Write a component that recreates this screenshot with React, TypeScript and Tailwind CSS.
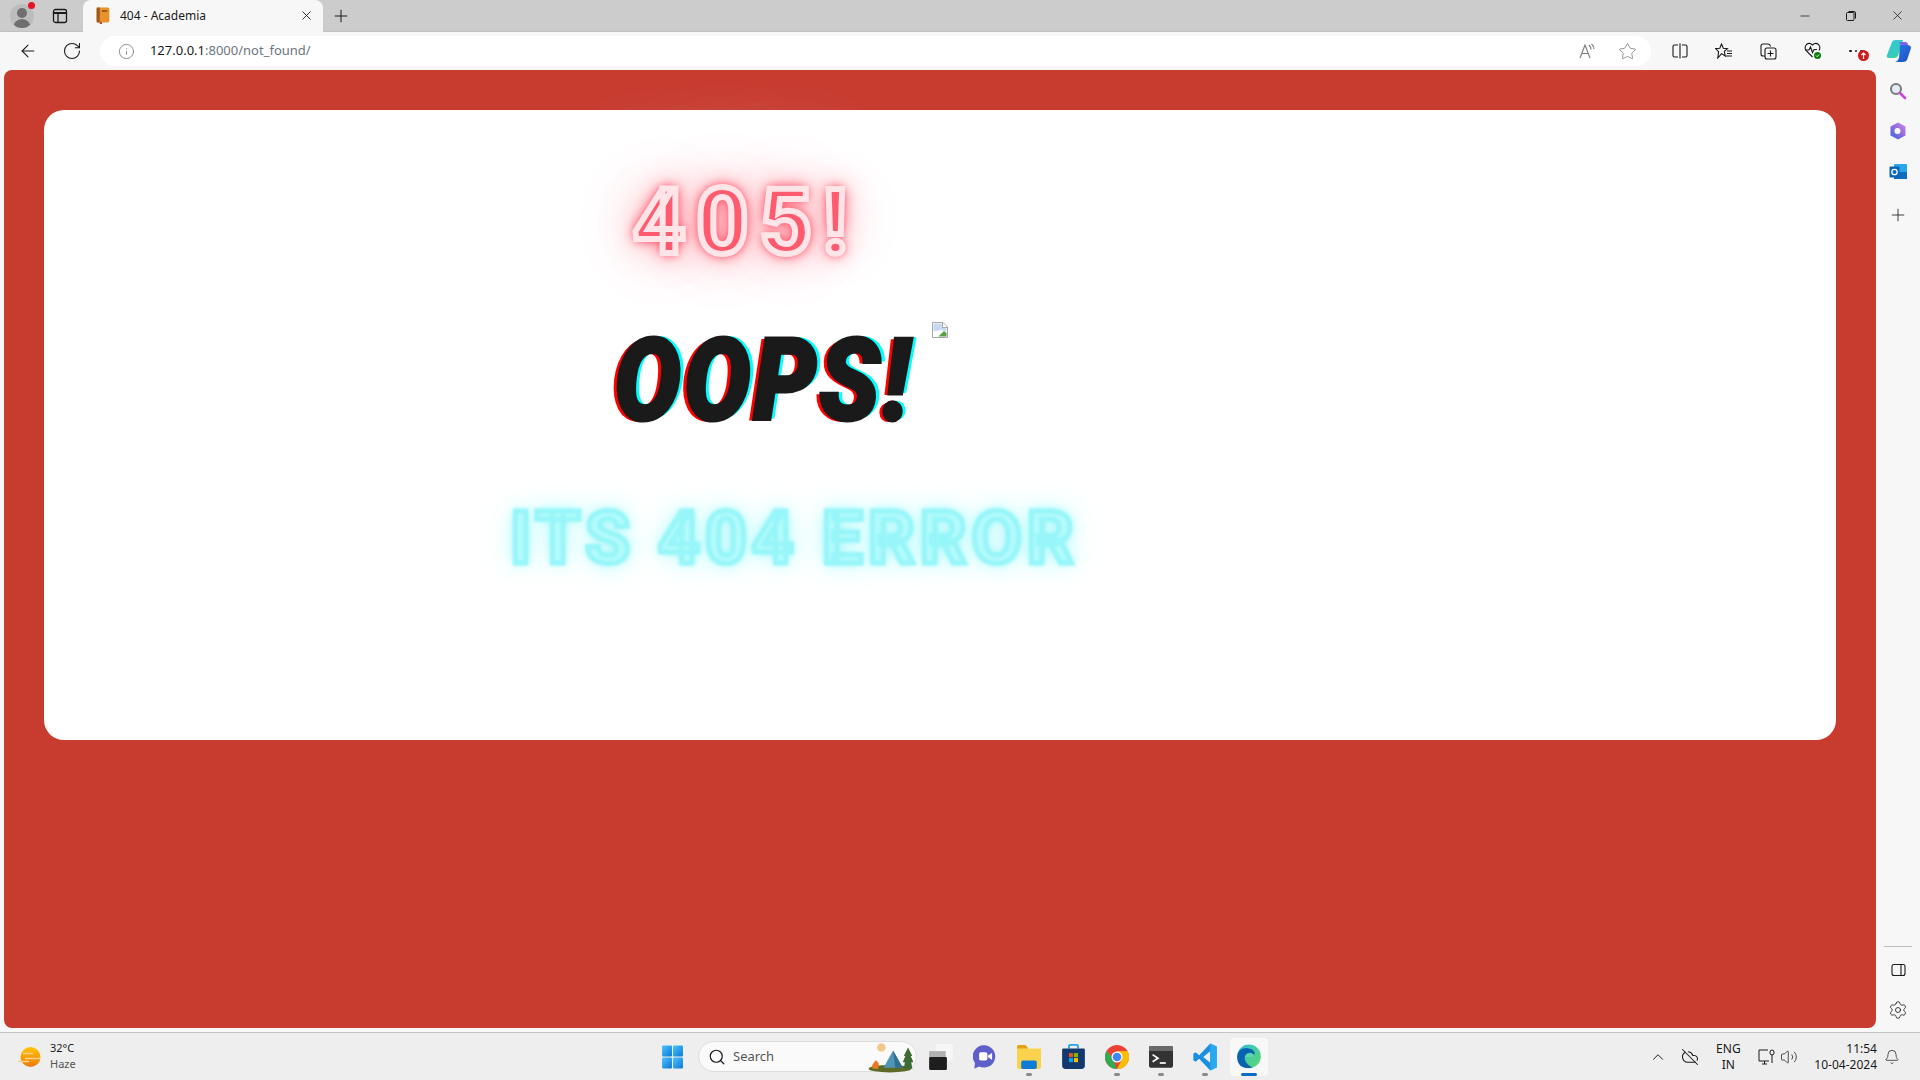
import React from "react";
import { ArrowLeft, RotateCw, Info, X, Plus, Minus, Star, ChevronUp, Bell, Settings, Search, Volume2, CloudOff } from "lucide-react";

const Profile = () => (
  <div className="relative w-[24px] h-[24px]">
    <div className="w-[24px] h-[24px] rounded-full bg-[#bcbcbc] overflow-hidden">
      <div className="w-[10px] h-[10px] rounded-full bg-[#6f6f6f] mx-auto mt-[4px]" />
      <div className="w-[18px] h-[10px] rounded-t-full bg-[#6f6f6f] mx-auto mt-[1px]" />
    </div>
    <span className="absolute right-[-1px] top-[-2px] w-[7px] h-[7px] rounded-full bg-[#e81123]" />
  </div>
);

const BookIcon = () => (
  <svg width="16" height="17" viewBox="0 0 14 16">
    <rect x="1" y="0.5" width="12" height="14" rx="1.5" fill="#e8912d" />
    <rect x="1" y="0.5" width="3" height="14" fill="#9c5a1c" />
    <rect x="6" y="3" width="5" height="1.5" fill="#8a5218" />
    <rect x="4" y="14" width="2" height="2" fill="#c53a2a" />
  </svg>
);

const TabsIcon = () => (
  <svg width="16" height="16" viewBox="0 0 16 16" fill="none" stroke="#1a1a1a" strokeWidth="1.3">
    <rect x="1.5" y="1.5" width="13" height="13" rx="2" />
    <path d="M1.5 5 H14.5" strokeWidth="2" />
    <path d="M6 5 V14.5" />
  </svg>
);

const Restore = () => (
  <svg width="12" height="12" viewBox="0 0 12 12" fill="none" stroke="#1a1a1a">
    <rect x="1.5" y="2.5" width="7.5" height="8" rx="1" />
    <path d="M3.5 1.5 H9 Q10.5 1.5 10.5 3 V8.5" />
  </svg>
);

const ReadAloud = () => (
  <svg width="18" height="16" viewBox="0 0 18 16" fill="none" stroke="#7a7a7a" strokeWidth="1.1">
    <path d="M1 15 L6 2 L11 15 M3 10.5 H9" />
    <path d="M10 2 Q12 4 12 6.5 M12.5 1 Q15 3 15 6" />
  </svg>
);

const SplitIcon = () => (
  <svg width="16" height="16" viewBox="0 0 16 16" fill="none" stroke="#1a1a1a" strokeWidth="1.1">
    <path d="M6 2 H2.5 Q1 2 1 3.5 V12.5 Q1 14 2.5 14 H6 M10 2 H13.5 Q15 2 15 3.5 V12.5 Q15 14 13.5 14 H10 M8 0.5 V15.5" />
  </svg>
);

const FavIcon = () => (
  <svg width="18" height="16" viewBox="0 0 18 16" fill="none" stroke="#1a1a1a" strokeWidth="1.1">
    <path d="M6.5 1 L8.3 5.2 L12.5 5.6 L9.3 8.4 L10.3 13 L6.5 10.6 L2.8 15 L3.6 8.6 L0.7 5.6 L4.8 5.2 Z" />
    <path d="M12 8 H17 M12 10.5 H17 M11 13 H17" />
  </svg>
);

const Collections = () => (
  <svg width="17" height="17" viewBox="0 0 17 17" fill="none" stroke="#1a1a1a" strokeWidth="1.1">
    <path d="M5 13 H3 Q1 13 1 11 V3 Q1 1 3 1 H8 Q10 1 10.5 3.5" />
    <rect x="5" y="5" width="11" height="11" rx="2" />
    <path d="M10.5 7.5 V13.5 M7.5 10.5 H13.5" />
  </svg>
);

const HeartCheck = () => (
  <svg width="18" height="18" viewBox="0 0 18 18" fill="none">
    <path d="M8.5 15 L2 8.5 Q0 5.5 2.5 2.5 Q5.5 0 8.5 3 Q11.5 0 14.5 2.5 Q17 5.5 15 8.5" stroke="#1a1a1a" strokeWidth="1.1" />
    <path d="M1.5 8 H5 L6.5 5 L8.5 10.5 L10 7.5 H13" stroke="#1a1a1a" strokeWidth="1.1" />
    <circle cx="13.5" cy="13.5" r="3.5" fill="#107c10" />
    <path d="M12 13.5 L13.2 14.7 L15 12.6" stroke="#fff" strokeWidth="0.9" />
  </svg>
);

const MoreIcon = () => (
  <div className="relative w-[20px] h-[20px] flex items-center gap-[3px]">
    <span className="w-[2.5px] h-[2.5px] rounded-full bg-[#1a1a1a]" />
    <span className="w-[2.5px] h-[2.5px] rounded-full bg-[#1a1a1a]" />
    <span className="w-[2.5px] h-[2.5px] rounded-full bg-[#1a1a1a]" />
    <span className="absolute left-[9px] top-[9px] w-[11px] h-[11px] rounded-full bg-[#d01c1c]">
      <svg width="11" height="11" viewBox="0 0 11 11" fill="none" stroke="#fff" strokeWidth="1.2">
        <path d="M5.5 9 V3 M3.5 5 L5.5 3 L7.5 5" />
      </svg>
    </span>
  </div>
);

const Copilot = () => (
  <svg width="26" height="24" viewBox="0 0 26 24">
    <defs>
      <linearGradient id="cp1" x1="0" y1="0" x2="1" y2="1">
        <stop offset="0" stopColor="#35c3e8" />
        <stop offset="1" stopColor="#37d39a" />
      </linearGradient>
      <linearGradient id="cp2" x1="0" y1="0" x2="1" y2="1">
        <stop offset="0" stopColor="#2a78e8" />
        <stop offset="1" stopColor="#1d4fc4" />
      </linearGradient>
    </defs>
    <path d="M9 1 H17 L12 17 Q10.5 19 8 19 H3 Q0 19 1 16 L6 3 Q7 1 9 1 Z" fill="url(#cp1)" />
    <path d="M14 6 H21 Q25 6 25 9 L21 21 Q20 23 17 23 H9 Q12 22 13 19 Z" fill="url(#cp2)" />
    <path d="M13 3 H19 Q22 3 22 6 H15 Z" fill="#8a5be8" />
  </svg>
);

const SideSearch = () => (
  <svg width="18" height="18" viewBox="0 0 18 18" fill="none">
    <circle cx="7" cy="7" r="5" fill="#e3edf5" stroke="#77797c" strokeWidth="2" />
    <path d="M11 11 L16 16" stroke="#d042e0" strokeWidth="2.6" strokeLinecap="round" />
  </svg>
);

const M365 = () => (
  <svg width="18" height="18" viewBox="0 0 18 18">
    <defs>
      <linearGradient id="ms1" x1="0" y1="1" x2="1" y2="0">
        <stop offset="0" stopColor="#2f6fe0" />
        <stop offset="0.5" stopColor="#8f6ae0" />
        <stop offset="1" stopColor="#d08ae0" />
      </linearGradient>
    </defs>
    <path d="M9 0.5 L16.5 4.5 V13.5 L9 17.5 L1.5 13.5 V4.5 Z" fill="url(#ms1)" />
    <circle cx="8.5" cy="9" r="3" fill="#fff" />
  </svg>
);

const Outlook = () => (
  <svg width="18" height="18" viewBox="0 0 18 18">
    <rect x="5" y="1" width="13" height="15" rx="1" fill="#28a8ea" />
    <path d="M5 9 L18 9 V16 H5 Z" fill="#0f6cbd" />
    <rect x="0.5" y="3.5" width="10" height="11" rx="1" fill="#0a64b8" />
    <circle cx="5.5" cy="9" r="2.7" fill="none" stroke="#fff" strokeWidth="1.3" />
  </svg>
);

const PanelIcon = () => (
  <svg width="15" height="14" viewBox="0 0 15 14" fill="none" stroke="#1a1a1a" strokeWidth="1.1">
    <rect x="1" y="1.5" width="13" height="11" rx="2" />
    <path d="M10 1.5 V12.5" />
  </svg>
);

const BrokenImage = () => (
  <svg width="16" height="16" viewBox="0 0 16 16">
    <path d="M0.5 0.5 H11 L15.5 5 V15.5 H0.5 Z" fill="#fff" stroke="#a9a9a9" />
    <path d="M1.5 1.5 H10.5 V5.5 H14.5 V9 H1.5 Z" fill="#c6d8f2" />
    <path d="M1.5 14.5 L1.5 12 Q8 6.5 11 8 L5 14.5 Z" fill="#ffffff" />
    <path d="M6.5 14.5 L12 9 L14.5 11 V14.5 Z" fill="#54a144" />
    <path d="M10.5 0.8 V5.5 H15.2" fill="#fff" stroke="#a9a9a9" />
  </svg>
);

const WeatherIcon = () => (
  <svg width="24" height="22" viewBox="0 0 24 22">
    <defs>
      <linearGradient id="sun" x1="0" y1="0" x2="0" y2="1">
        <stop offset="0" stopColor="#ffc400" />
        <stop offset="1" stopColor="#ee7a0c" />
      </linearGradient>
    </defs>
    <circle cx="12.5" cy="11" r="10" fill="url(#sun)" />
    <path d="M5 7.5 H15 M7 12.5 H22 M0 15.5 H11" stroke="#f3d48e" strokeWidth="1.6" />
  </svg>
);

const WinLogo = () => (
  <svg width="23" height="24" viewBox="0 0 20 23">
    <defs>
      <linearGradient id="win" x1="0" y1="0" x2="1" y2="1">
        <stop offset="0" stopColor="#4cc2ff" />
        <stop offset="1" stopColor="#0a78d6" />
      </linearGradient>
    </defs>
    <rect x="0" y="0.5" width="9.5" height="10.5" rx="1" fill="url(#win)" />
    <rect x="10.5" y="0.5" width="9.5" height="10.5" rx="1" fill="url(#win)" />
    <rect x="0" y="12" width="9.5" height="10.5" rx="1" fill="url(#win)" />
    <rect x="10.5" y="12" width="9.5" height="10.5" rx="1" fill="url(#win)" />
  </svg>
);

const Camp = () => (
  <svg width="48" height="32" viewBox="0 0 42 30">
    <circle cx="12" cy="6" r="4" fill="#f3c88a" />
    <ellipse cx="20" cy="26" rx="20" ry="3.5" fill="#5e6b26" />
    <path d="M14 25 L23 9 L32 25 Z" fill="#4e94b8" />
    <path d="M23 9 L32 25 H25 Z" fill="#2f6f91" />
    <path d="M37 6 L41 14 L39.5 14 L42 20 L40 20 L41 26 H33 L34 20 L32 20 L34.5 14 L33 14 Z" fill="#3d6b34" />
    <path d="M7 18 Q11 21 9 26 H4 Q2 22 7 18 Z" fill="#ee7722" />
  </svg>
);

const FilesApp = () => (
  <svg width="24" height="26" viewBox="0 0 20 22">
    <rect x="6" y="0" width="14" height="14" rx="1" fill="#f6f6f6" />
    <rect x="0" y="6" width="14" height="14" fill="#b0b0b0" />
    <rect x="0" y="11" width="15" height="11" rx="1" fill="#1e1e1e" />
  </svg>
);

const TeamsApp = () => (
  <svg width="24" height="26" viewBox="0 0 20 22">
    <path d="M10 1 A9.5 9.5 0 1 1 5 19 L1 21 L1.5 16 A9.5 9.5 0 0 1 10 1 Z" fill="#5f5fc9" />
    <rect x="5" y="7" width="7" height="7" rx="1.5" fill="#fff" />
    <path d="M12.5 10 L16 7.5 V13.5 L12.5 11 Z" fill="#fff" />
  </svg>
);

const Explorer = () => (
  <svg width="24" height="24" viewBox="0 0 20 20">
    <path d="M0 1.5 Q0 0 1.5 0 H7 L9 2 V5 H0 Z" fill="#e0a50e" />
    <path d="M0 3 H20 V18.5 Q20 20 18.5 20 H1.5 Q0 20 0 18.5 Z" fill="#fbd24d" />
    <rect x="3.5" y="13" width="13" height="7" rx="1.5" fill="#0f7bd4" />
  </svg>
);

const Store = () => (
  <svg width="23" height="25" viewBox="0 0 20 22">
    <path d="M6 4 V2 Q6 0.8 7.5 0.8 H12.5 Q14 0.8 14 2 V4" fill="none" stroke="#25a2e8" strokeWidth="1.6" />
    <path d="M0 5 Q0 4 1 4 H19 Q20 4 20 5 V19 Q20 22 17 22 H3 Q0 22 0 19 Z" fill="#12386e" />
    <rect x="6" y="8" width="3.6" height="3.6" fill="#f25022" />
    <rect x="10.4" y="8" width="3.6" height="3.6" fill="#7fba00" />
    <rect x="6" y="12.4" width="3.6" height="3.6" fill="#00a4ef" />
    <rect x="10.4" y="12.4" width="3.6" height="3.6" fill="#ffb900" />
  </svg>
);

const ChromeApp = () => (
  <svg width="24" height="24" viewBox="0 0 20 20">
    <circle cx="10" cy="10" r="10" fill="#ea4335" />
    <path d="M10 20 A10 10 0 0 1 1.3 5 L6 10 L10 20 Z" fill="#34a853" />
    <path d="M10 20 A10 10 0 0 0 18.7 5 H10 L14 12 Z" fill="#fbbc04" />
    <circle cx="10" cy="10" r="4.6" fill="#fff" />
    <circle cx="10" cy="10" r="3.6" fill="#4285f4" />
  </svg>
);

const Terminal = () => (
  <svg width="24" height="22" viewBox="0 0 20 18" fill="none">
    <rect x="0" y="0" width="20" height="18" rx="1.5" fill="#333333" />
    <rect x="0" y="0" width="20" height="4" fill="#6a6a6a" />
    <path d="M3 7 L7.5 10 L3 13" stroke="#fff" strokeWidth="1.4" />
    <path d="M9 14 H14" stroke="#fff" strokeWidth="1.4" />
  </svg>
);

const VSCode = () => (
  <svg width="24" height="28" viewBox="0 0 20 24">
    <path d="M14.5 0.5 L20 3 V21 L14.5 23.5 L5 13.5 L2 16 L0 14.8 V9.2 L2 8 L5 10.5 Z M14.5 7 L8.5 12 L14.5 17 Z" fill="#1c8ee0" fillRule="evenodd" />
    <path d="M14.5 0.5 L20 3 V21 L14.5 23.5 Z M14.5 7 V17 L14.5 17 Z" fill="#29a9f0" />
  </svg>
);

const EdgeApp = () => (
  <svg width="24" height="26" viewBox="0 0 20 22">
    <defs>
      <linearGradient id="edge" x1="0" y1="0" x2="1" y2="1">
        <stop offset="0" stopColor="#2fc1d8" />
        <stop offset="1" stopColor="#5fd86a" />
      </linearGradient>
    </defs>
    <circle cx="10" cy="10.5" r="10" fill="url(#edge)" />
    <path d="M0 10.5 Q1 3 9 3.5 Q15 4 15 9 Q9 5.5 6.5 10 Q5 16 13 20 Q0 22 0 10.5 Z" fill="#0b63b0" />
    <path d="M7 11 Q8 7 12 8 Q14 9 13 11 H7 Z" fill="#fff" opacity="0.15" />
  </svg>
);

const Monitor = () => (
  <svg width="17" height="16" viewBox="0 0 17 16" fill="none" stroke="#1a1a1a" strokeWidth="1">
    <path d="M11 12 H1 V1 H10 M4 15 H9 M6.5 12 V15" />
    <rect x="12" y="1" width="4" height="5" rx="2" />
    <path d="M14 6 V14" />
  </svg>
);

const appIcons = [
  { icon: <FilesApp />, dot: false },
  { icon: <TeamsApp />, dot: false },
  { icon: <Explorer />, dot: true },
  { icon: <Store />, dot: false },
  { icon: <ChromeApp />, dot: true },
  { icon: <Terminal />, dot: true },
  { icon: <VSCode />, dot: true },
];

export default function App() {
  return (
    <div className="flex flex-col w-[1920px] h-[1080px] overflow-hidden bg-[#f7f7f7] font-['Noto_Sans',sans-serif] text-[#1a1a1a]">
      {/* Tab strip */}
      <div className="flex items-center h-8 bg-[#cccccc] border-b border-[#c0c0c0]">
        <div className="ml-[10px]"><Profile /></div>
        <div className="ml-[18px]"><TabsIcon /></div>
        <div className="flex items-center ml-[15px] w-[240px] h-8 bg-[#f7f7f7] rounded-t-lg pl-[12px] pr-[9px]">
          <BookIcon />
          <span className="ml-[9px] text-[12px] flex-1">404 - Academia</span>
          <X size={15} strokeWidth={1.4} />
        </div>
        <Plus size={20} strokeWidth={1.2} className="ml-[8px]" />
        <div className="flex items-center ml-auto mr-[15px] gap-[33px]">
          <Minus size={14} strokeWidth={1.3} />
          <Restore />
          <X size={15} strokeWidth={1.2} />
        </div>
      </div>

      {/* Toolbar */}
      <div className="flex items-center h-[38px] pl-[18px] pr-[8px]">
        <ArrowLeft size={20} strokeWidth={1.3} />
        <RotateCw size={20} strokeWidth={1.3} className="ml-[24px]" />
        <div className="flex items-center ml-[18px] w-[1554px] h-[30px] bg-white rounded-full pl-[18px] pr-[14px]">
          <Info size={17} strokeWidth={1.1} className="text-[#707070]" />
          <span className="ml-[15px] text-[13px]">
            127.0.0.1<span className="text-[#6c7680]">:8000/not_found/</span>
          </span>
          <div className="flex items-center ml-auto gap-[21px]">
            <ReadAloud />
            <Star size={19} strokeWidth={1} className="text-[#7a7a7a]" />
          </div>
        </div>
        <div className="flex items-center ml-[21px] gap-[27px]">
          <SplitIcon />
          <FavIcon />
          <Collections />
          <HeartCheck />
          <MoreIcon />
        </div>
        <div className="ml-[17px]"><Copilot /></div>
      </div>

      {/* Page + sidebar */}
      <div className="flex flex-1 min-h-0">
        <div className="ml-1 mb-1 w-[1872px] rounded-lg bg-[#c83c30] pt-10 px-10">
          <div className="flex flex-col h-[630px] bg-white rounded-[20px]">
            <h1 className="mt-[66px] ml-[589px] text-[91px] leading-[92px] tracking-[11px] font-['Roboto',sans-serif] font-bold text-transparent [-webkit-text-stroke:6px_#ffe4e8] [text-shadow:0_0_3px_#ff5a6e,0_0_8px_#ff5068,0_0_12px_#ff5068,0_0_20px_#ff7a8a,0_0_42px_#ffb4be,0_0_70px_#ffd0d6,0_0_100px_#ffdfe2,0_0_120px_#ffe8ea]">
              405!
            </h1>
            <div className="flex items-start mt-[54px]">
              <h2 className="ml-[570px] w-[318px] text-[115px] leading-[118px] tracking-[3px] font-['Roboto',sans-serif] font-black italic text-[#1a1a1a] origin-left scale-x-[0.87] whitespace-nowrap [-webkit-text-stroke:3px_#1a1a1a] [text-shadow:-5px_1px_0_#ff0000,5px_-1px_0_#00ffff]">
                OOPS!
              </h2>
              <BrokenImage />
            </div>
            <h2 className="mt-[62px] ml-[466px] text-[73px] leading-[73px] tracking-[5px] font-['Roboto',sans-serif] font-bold text-[#b4fafb] whitespace-nowrap blur-[1px] [-webkit-text-stroke:5px_#97f6f9] [text-shadow:0_0_8px_#7ff4f7,0_0_22px_#b4f9fb,0_0_40px_#d8fcfc]">
              ITS 404 ERROR
            </h2>
          </div>
        </div>

        <div className="flex flex-col items-center flex-1 pt-[12px] pb-[12px]">
          <SideSearch />
          <div className="mt-[22px]"><M365 /></div>
          <div className="mt-[23px]"><Outlook /></div>
          <Plus size={20} strokeWidth={1} className="mt-[24px]" />
          <div className="mt-auto w-[28px] border-t border-[#bdbdbd]" />
          <div className="mt-[16px]"><PanelIcon /></div>
          <Settings size={20} strokeWidth={1} className="mt-[23px]" />
        </div>
      </div>

      {/* Taskbar */}
      <div className="relative flex items-center h-12 bg-[#eeeeee] border-t border-[#c4c4c4]">
        <div className="flex items-center ml-[18px] w-[643px]">
          <WeatherIcon />
          <div className="ml-[8px] -mt-[1px] text-[11px] leading-[16px]">
            <div>32°C</div>
            <div className="text-[#555555]">Haze</div>
          </div>
        </div>
        <WinLogo />
        <div className="flex items-center ml-[14px] w-[219px] h-[31px] bg-[#fafafa] rounded-full border border-[#dddddd] pl-[9px] pr-[1px]">
          <Search size={18} strokeWidth={1.6} />
          <span className="ml-[7px] text-[13px] text-[#555555]">Search</span>
          <div className="ml-auto"><Camp /></div>
        </div>
        <div className="flex items-center ml-[2px]">
          {appIcons.map((t, i) => (
            <div key={i} className="relative flex items-center justify-center w-[44px] h-[38px]">
              {t.icon}
              {t.dot && <span className="absolute bottom-0 w-[6px] h-[3px] rounded-full bg-[#8a8a8a]" />}
            </div>
          ))}
          <div className="relative flex items-center justify-center w-[38px] h-[38px] ml-[3px] bg-[#f8f8f8] rounded">
            <EdgeApp />
            <span className="absolute bottom-0 w-[16px] h-[3px] rounded-full bg-[#0a6cc4]" />
          </div>
        </div>

        <div className="flex items-center ml-auto pr-[20px]">
          <ChevronUp size={18} strokeWidth={1.3} />
          <CloudOff size={18} strokeWidth={1.4} className="ml-[14px]" />
          <div className="ml-[16px] w-[26px] text-center text-[12px] leading-[16px]">
            <div>ENG</div>
            <div>IN</div>
          </div>
          <div className="ml-[17px]"><Monitor /></div>
          <Volume2 size={18} strokeWidth={1} className="ml-[5px]" />
          <div className="ml-[16px] text-right text-[12px] leading-[16px] whitespace-nowrap">
            <div>11:54</div>
            <div>10-04-2024</div>
          </div>
          <Bell size={16} strokeWidth={1.1} className="ml-[7px]" />
        </div>
      </div>
    </div>
  );
}
